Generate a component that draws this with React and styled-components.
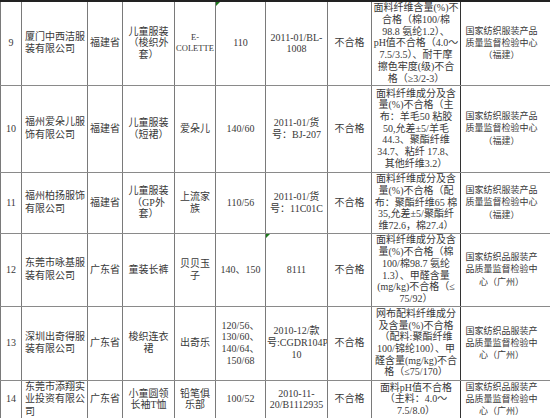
import React from "react";
import styled, { createGlobalStyle } from "styled-components";

const Global = createGlobalStyle`
  html, body { margin: 0; padding: 0; background: #fff; overflow: hidden; }
  body { width: 550px; height: 418px; }
`;

const Sheet = styled.div`
  width: 560px;
  height: 418px;
  overflow: hidden;
`;

const Table = styled.table`
  border-collapse: collapse;
  table-layout: fixed;
  width: 600px;
  font-family: "Liberation Serif", "Noto Sans CJK SC", serif;
  font-size: 10px;
  color: #383838;
  border-top: 2px solid #222;
  border-bottom: 2px solid #222;
`;

const Row = styled.tr`
  height: ${(p) => p.$h}px;
`;

const Cell = styled.td`
  position: relative;
  border-left: 1px solid ${(p) => (p.$strong ? "#333" : "#7a7a7a")};
  border-right: 1px solid ${(p) => (p.$strong ? "#333" : "#7a7a7a")};
  border-top: 1px solid #8a8a8a;
  border-bottom: 1px solid #8a8a8a;
  padding: 0 ${(p) => p.$padR}px 0 ${(p) => p.$padL}px;
  text-align: ${(p) => p.$align};
  vertical-align: middle;
  white-space: nowrap;
  font-size: ${(p) => p.$size}px;
  line-height: ${(p) => p.$lh}px;
  overflow: hidden;
`;

const Line = styled.div`
  display: block;
`;

const Flag = styled.span`
  position: absolute;
  left: 0;
  top: 0;
  width: 0;
  height: 0;
  border-top: 4px solid #1e7a1e;
  border-right: 4px solid transparent;
`;

const cols = [21, 66, 35, 52, 41, 50, 62, 44, 89, 140];

const rows = [
  {
    h: 84,
    c: [
      ["9"],
      ["厦门中西洁服", "装有限公司"],
      ["福建省"],
      ["儿童服装", "（梭织外", "套）"],
      ["E-", "COLETTE"],
      ["110"],
      ["2011-01/BL-", "1008"],
      ["不合格"],
      ["面料纤维含量(%)不", "合格（棉100/棉", "98.8 氨纶1.2）、", "pH值不合格（4.0～", "7.5/3.5）、耐干摩", "擦色牢度(级)不合", "格（≥3/2-3）"],
      ["国家纺织服装产品", "质量监督检验中心", "（福建）"],
    ],
    flag: 5,
  },
  {
    h: 87,
    c: [
      ["10"],
      ["福州爱朵儿服", "饰有限公司"],
      ["福建省"],
      ["儿童服装", "（短裙）"],
      ["爱朵儿"],
      ["140/60"],
      ["2011-01/货", "号：BJ-207"],
      ["不合格"],
      ["面料纤维成分及含", "量(%)不合格（主", "布：羊毛50 粘胶", "50,允差±5/羊毛", "44.3、聚酯纤维", "34.7、粘纤 17.8、", "其他纤维3.2）"],
      ["国家纺织服装产品", "质量监督检验中心", "（福建）"],
    ],
  },
  {
    h: 61,
    c: [
      ["11"],
      ["福州柏扬服饰", "有限公司"],
      ["福建省"],
      ["儿童服装", "（GP外", "套）"],
      ["上流家", "族"],
      ["110/56"],
      ["2011-01/货", "号：11C01C"],
      ["不合格"],
      ["面料纤维成分及含", "量(%)不合格（配", "布：聚酯纤维65 棉", "35,允差±5/聚酯纤", "维72.6，棉27.4）"],
      ["国家纺织服装产品", "质量监督检验中心", "（福建）"],
    ],
  },
  {
    h: 73,
    c: [
      ["12"],
      ["东莞市咏基服", "装有限公司"],
      ["广东省"],
      ["童装长裤"],
      ["贝贝玉", "子"],
      ["140、150"],
      ["8111"],
      ["不合格"],
      ["面料纤维成分及含", "量(%)不合格（棉", "100/棉98.7 氨纶", "1.3）、甲醛含量", "(mg/kg)不合格（≤", "75/92）"],
      ["国家纺织品服装产", "品质量监督检验中", "心（广州）"],
    ],
    flag: 6,
  },
  {
    h: 74,
    c: [
      ["13"],
      ["深圳出奇得服", "装有限公司"],
      ["广东省"],
      ["梭织连衣", "裙"],
      ["出奇乐"],
      ["120/56、", "130/60、", "140/64、", "150/68"],
      ["2010-12/款", "号:CGDR104P", "10"],
      ["不合格"],
      ["网布配料纤维成分", "及含量(%)不合格", "（配料:聚酯纤维", "100/锦纶100）、甲", "醛含量(mg/kg)不合", "格（≤75/170）"],
      ["国家纺织品服装产", "品质量监督检验中", "心（广州）"],
    ],
  },
  {
    h: 37,
    c: [
      ["14"],
      ["东莞市添翔实", "业投资有限公", "司"],
      ["广东省"],
      ["小童圆领", "长袖T恤"],
      ["铅笔俱", "乐部"],
      ["100/52"],
      ["2010-11-", "20/B1112935"],
      ["不合格"],
      ["面料pH值不合格", "（主料：4.0～", "7.5/8.0）"],
      ["国家纺织品服装产", "品质量监督检验中", "心（广州）"],
    ],
  },
];

const cellProps = (ci, ri) => {
  if (ci === 1) return { $align: "left", $padL: 3, $padR: 1, $size: 10, $lh: 12.5 };
  if (ci === 4 && ri === 0) return { $align: "center", $padL: 0, $padR: 0, $size: 8.5, $lh: 11.7 };
  if (ci === 9) return { $align: "center", $padL: 4, $padR: 62, $size: 9, $lh: 12.2 };
  return { $align: "center", $padL: 1, $padR: 1, $size: 10, $lh: 11.7 };
};

export default function App() {
  return (
    <>
      <Global />
      <Sheet>
        <Table>
          <colgroup>
            {cols.map((w, i) => (
              <col key={i} style={{ width: w }} />
            ))}
          </colgroup>
          <tbody>
            {rows.map((r, ri) => (
              <Row key={ri} $h={r.h}>
                {r.c.map((lines, ci) => (
                  <Cell key={ci} {...cellProps(ci, ri)} $strong={ci === 8}>
                    {r.flag === ci && <Flag />}
                    {lines.map((t, li) => (
                      <Line key={li}>{t}</Line>
                    ))}
                  </Cell>
                ))}
              </Row>
            ))}
          </tbody>
        </Table>
      </Sheet>
    </>
  );
}
